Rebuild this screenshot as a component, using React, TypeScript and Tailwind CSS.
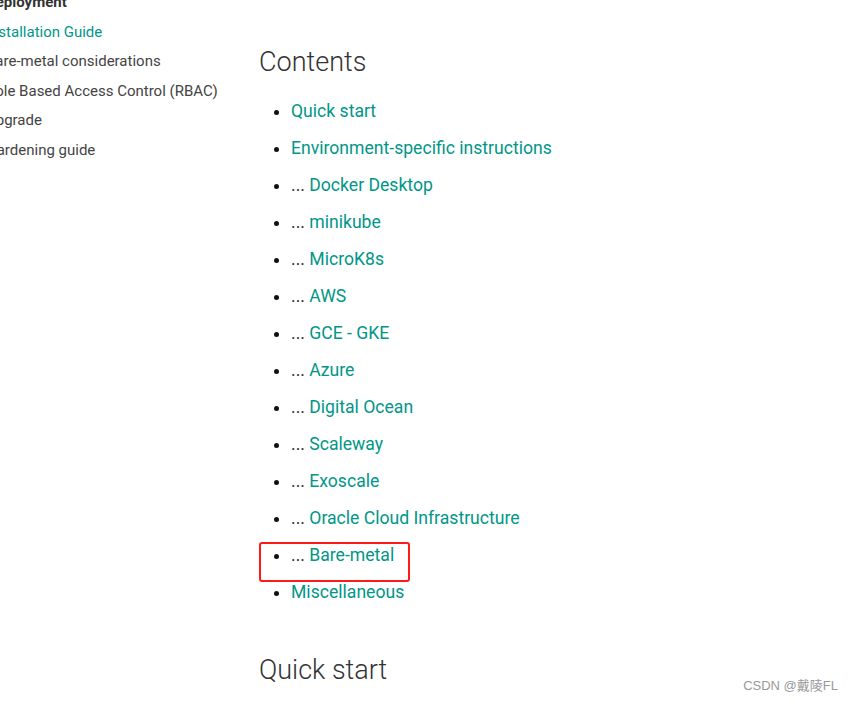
const SIDEBAR = [
    { label: 'Installation Guide', active: true },
    { label: 'Bare-metal considerations' },
    { label: 'Role Based Access Control (RBAC)' },
    { label: 'Upgrade' },
    { label: 'Hardening guide' },
];

const CONTENTS: { prefix?: boolean; label: string }[] = [
    { label: 'Quick start' },
    { label: 'Environment-specific instructions' },
    { prefix: true, label: 'Docker Desktop' },
    { prefix: true, label: 'minikube' },
    { prefix: true, label: 'MicroK8s' },
    { prefix: true, label: 'AWS' },
    { prefix: true, label: 'GCE - GKE' },
    { prefix: true, label: 'Azure' },
    { prefix: true, label: 'Digital Ocean' },
    { prefix: true, label: 'Scaleway' },
    { prefix: true, label: 'Exoscale' },
    { prefix: true, label: 'Oracle Cloud Infrastructure' },
    { prefix: true, label: 'Bare-metal' },
    { label: 'Miscellaneous' },
];

export default function App() {
    return (
        <div className="relative w-[854px] h-[703px] overflow-hidden bg-white font-['Roboto',sans-serif]">
            <div className="flex">
                {/* Sidebar nav */}
                <nav className="w-[273px] shrink-0 -ml-[14px] -mt-[12px] text-[15px] leading-[29.5px] text-[#444]">
                    <p className="font-bold text-[#333]">Deployment</p>
                    {SIDEBAR.map((s) => (
                        <p key={s.label} className={s.active ? 'text-[#009688]' : ''}>{s.label}</p>
                    ))}
                </nav>

                {/* Main content */}
                <main className="flex-1 pt-[44px]">
                    <h2 className="text-[27px] leading-[36px] font-light text-[#333]">Contents</h2>
                    <ul className="mt-[13px] list-disc pl-[32px] text-[17.6px] leading-[37px] text-[#222] marker:text-[#111]">
                        {CONTENTS.map((c) => (
                            <li key={c.label} className="relative">
                                {c.prefix && <span className="text-[#333]">... </span>}
                                <a className="text-[#009688]">{c.label}</a>
                                {c.label === 'Bare-metal' && (
                                    <span className="absolute left-[-32px] top-[5px] w-[151px] h-[40px] border-2 border-[#ff1a1a] rounded-[3px]" />
                                )}
                            </li>
                        ))}
                    </ul>
                    <h2 className="mt-[41px] text-[27px] leading-[36px] font-light text-[#333]">Quick start</h2>
                </main>
            </div>

            <span className="absolute right-[16px] bottom-[8px] text-[13px] text-[#999] font-['Liberation_Sans','Noto_Sans_CJK_SC',sans-serif]">CSDN @戴陵FL</span>
        </div>
    );
}
